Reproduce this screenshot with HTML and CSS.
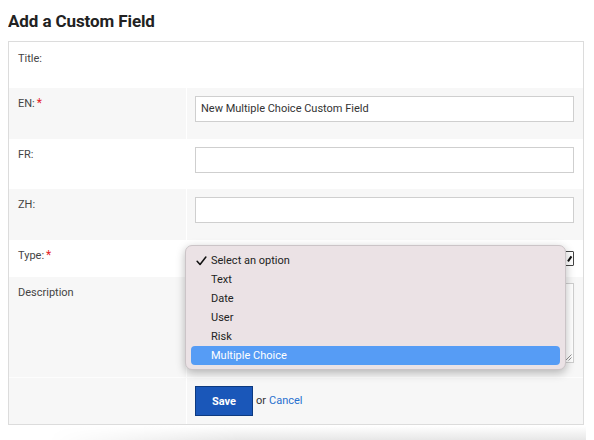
FILE: index.html
```html
<!DOCTYPE html>
<html>
<head>
<meta charset="utf-8">
<link rel="stylesheet" href="styles.css">
</head>
<body>
<h1 class="title">Add a Custom Field</h1>
<div class="panel">
  <div class="row row-title white">
    <div class="label">Title:</div>
    <div class="field"></div>
  </div>
  <div class="row row-input gray">
    <div class="label">EN:<span class="req">*</span></div>
    <div class="field"><div class="input">New Multiple Choice Custom Field</div></div>
  </div>
  <div class="row row-input white fr">
    <div class="label">FR:</div>
    <div class="field"><div class="input"></div></div>
  </div>
  <div class="row row-input gray">
    <div class="label">ZH:</div>
    <div class="field"><div class="input"></div></div>
  </div>
  <div class="row row-type white">
    <div class="label">Type:<span class="req">*</span></div>
    <div class="field field-rel">
      <div class="select"><span class="arrow"></span></div>
      <div class="popup">
        <div class="opt checked"><svg class="check" viewBox="0 0 12 11" width="11" height="10"><path d="M1.2 5.8 L4.4 9.4 L10.8 1.2" fill="none" stroke="#111" stroke-width="1.7" stroke-linecap="round" stroke-linejoin="round"/></svg>Select an option</div>
        <div class="opt">Text</div>
        <div class="opt">Date</div>
        <div class="opt">User</div>
        <div class="opt">Risk</div>
        <div class="opt active">Multiple Choice</div>
      </div>
    </div>
  </div>
  <div class="row row-desc gray">
    <div class="label">Description</div>
    <div class="field"><div class="textarea"><svg class="grip" viewBox="0 0 7 7" width="7" height="7"><path d="M6.5 0.5 L0.5 6.5 M6.5 3.5 L3.5 6.5" stroke="#777" stroke-width="0.8"/></svg></div></div>
  </div>
  <div class="row row-save gray">
    <div class="label"></div>
    <div class="field actions">
      <button class="save">Save</button>
      <span class="or">or</span>
      <a class="cancel">Cancel</a>
    </div>
  </div>
</div>
<div class="shade"></div>
</body>
</html>
```
FILE: styles.css
```css
html, body {
  margin: 0;
  padding: 0;
  background: #fff;
}
body {
  margin: 8px;
  font-family: Roboto, "Liberation Sans", sans-serif;
  color: #333;
}
.title {
  margin: 0 0 7px 0;
  font-size: 17px;
  line-height: 26px;
  font-weight: 700;
  color: #222;
  letter-spacing: -0.1px;
}
.panel {
  width: 576px;
  box-sizing: border-box;
  border: 1px solid #dcdcdc;
}
.row {
  display: grid;
  grid-template-columns: 178px 1fr;
}
.white { background: #fff; }
.gray { background: #f7f7f7; }
.label {
  padding: 9px 9px 8px 9px;
  font-size: 11px;
  line-height: 13px;
  color: #444;
  border-right: 1px solid #fff;
}
.row-title .label { padding-top: 10px; }
.req {
  color: #e5242a;
  margin-left: 2px;
  font-size: 12px;
}
.field {
  padding: 8px 9px 0 8px;
}
.row-title { height: 46px; }
.row-input { height: 51px; }
.fr { height: 50px; }
.row-type { height: 37px; }
.row-desc { height: 100px; border-bottom: 1px solid #fdfdfd; }
.row-save { height: 46px; }
.input {
  height: 26px;
  box-sizing: border-box;
  border: 1px solid #cfcfcf;
  background: #fff;
  font-size: 11px;
  line-height: 24px;
  padding: 0 5px;
  color: #333;
}
.field-rel {
  position: relative;
  padding-top: 11px;
}
.select {
  height: 15px;
  box-sizing: border-box;
  border: 1px solid #444;
  border-radius: 1px;
  background: #fff;
  position: relative;
}
.arrow {
  position: absolute;
  right: 2px;
  top: 3px;
  width: 3px;
  height: 6px;
  border-right: 2px solid #111;
  transform: rotate(35deg);
}
.popup {
  position: absolute;
  left: -2px;
  top: 5px;
  width: 381px;
  height: 125px;
  box-sizing: border-box;
  padding: 5px 5px 0 5px;
  background: #ebe2e5;
  border: 1px solid #cbc4c7;
  border-radius: 7px;
  box-shadow: 0 3px 10px rgba(0, 0, 0, 0.28);
  z-index: 2;
}
.opt {
  position: relative;
  height: 19px;
  line-height: 19px;
  padding-left: 20px;
  font-size: 11px;
  color: #222;
  border-radius: 4px;
}
.opt.active {
  background: #569cf5;
  color: #fff;
}
.check {
  position: absolute;
  left: 5px;
  top: 5px;
}
.textarea {
  margin-top: -2px;
  height: 80px;
  box-sizing: border-box;
  border: 1px solid #cfcfcf;
  background: #fff;
  position: relative;
}
.grip {
  position: absolute;
  right: 1px;
  bottom: 1px;
}
.actions {
  display: flex;
  align-items: flex-start;
  padding-top: 8px;
  font-size: 11px;
}
.save {
  width: 58px;
  height: 30px;
  background: #1a57b9;
  border: 1px solid #0d3a80;
  color: #fff;
  font-family: Roboto, "Liberation Sans", sans-serif;
  font-size: 11px;
  font-weight: 700;
  padding: 0;
  margin: 0;
}
.or {
  margin-left: 3px;
  line-height: 30px;
  color: #333;
}
.cancel {
  margin-left: 3px;
  line-height: 30px;
  color: #2770cf;
}
.shade {
  margin: 1px -8px 0 40px;
  height: 16px;
  background: linear-gradient(to bottom, rgba(255,255,255,1), rgba(228,228,228,1));
  -webkit-mask-image: linear-gradient(to right, transparent, #000 35%);
  mask-image: linear-gradient(to right, transparent, #000 35%);
}
```
